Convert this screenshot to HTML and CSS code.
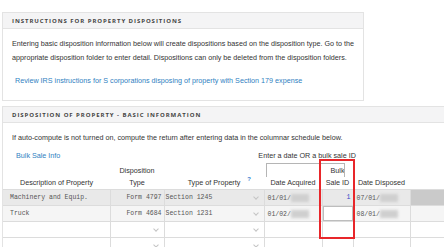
FILE: index.html
```html
<!DOCTYPE html>
<html lang="en">
<head>
    <meta charset="UTF-8">
    <title>Property Dispositions</title>
    <link rel="stylesheet" href="styles.css">
</head>
<body>
    <div class="page">
        <!-- Instructions -->
        <div class="panel panel-info">
            <div class="panel-head">INSTRUCTIONS FOR PROPERTY DISPOSITIONS</div>
            <div class="panel-body">
                <p class="text">Entering basic disposition information below will create dispositions based on the disposition type. Go to the appropriate disposition folder to enter detail. Dispositions can only be deleted from the disposition folders.</p>
                <p class="link-line"><a class="link" href="#">Review IRS instructions for S corporations disposing of property with Section 179 expense</a></p>
            </div>
        </div>

        <!-- Basic information -->
        <div class="panel panel-grid">
            <div class="panel-head">DISPOSITION OF PROPERTY - BASIC INFORMATION</div>
            <div class="panel-body flush">
                <p class="text">If auto-compute is not turned on, compute the return after entering data in the columnar schedule below.</p>
                <div class="bulk-row">
                    <a class="link" href="#">Bulk Sale Info</a>
                    <span class="bulk-note">Enter a date OR a bulk sale ID</span>
                </div>
                <div class="grid-wrap">
                    <div class="bulk-box"></div>
                    <div class="highlight"></div>
                    <table class="grid">
                        <colgroup>
                            <col style="width: 107px">
                            <col style="width: 54px">
                            <col style="width: 100px">
                            <col style="width: 58px">
                            <col style="width: 31px">
                            <col style="width: 57px">
                            <col style="width: 70px">
                        </colgroup>
                        <thead>
                            <tr>
                                <th>Description of Property</th>
                                <th>Disposition<br>Type</th>
                                <th class="has-help">Type of Property <span class="help">?</span></th>
                                <th>Date Acquired</th>
                                <th>Bulk<br>Sale ID</th>
                                <th>Date Disposed</th>
                                <th></th>
                            </tr>
                        </thead>
                        <tbody>
                            <tr class="row-active">
                                <td class="mono first">Machinery and Equip.</td>
                                <td class="mono right">Form 4797</td>
                                <td class="mono select">Section 1245<span class="chev"></span></td>
                                <td class="mono">01/01/<span class="blur"></span></td>
                                <td class="mono right num">1</td>
                                <td class="mono">07/01/<span class="blur"></span></td>
                                <td class="dark"></td>
                            </tr>
                            <tr class="row-alt">
                                <td class="mono first">Truck</td>
                                <td class="mono right">Form 4684</td>
                                <td class="mono select">Section 1231<span class="chev"></span></td>
                                <td class="mono">01/02/<span class="blur"></span></td>
                                <td class="input-cell"><span class="cell-input"></span></td>
                                <td class="mono">08/01/<span class="blur"></span></td>
                                <td></td>
                            </tr>
                            <tr>
                                <td></td>
                                <td class="select"><span class="chev"></span></td>
                                <td class="select"><span class="chev"></span></td>
                                <td></td>
                                <td></td>
                                <td></td>
                                <td></td>
                            </tr>
                            <tr>
                                <td></td>
                                <td class="select"><span class="chev"></span></td>
                                <td class="select"><span class="chev"></span></td>
                                <td></td>
                                <td></td>
                                <td></td>
                                <td></td>
                            </tr>
                        </tbody>
                    </table>
                </div>
            </div>
        </div>
    </div>
</body>
</html>
```

FILE: styles.css
```css
body {
    margin: 0;
    font-family: "Liberation Sans", Arial, sans-serif;
    font-size: 7.2px;
    color: #333;
    background-color: #fff;
    overflow: hidden;
}
.page {
    padding: 12px 0 0 2px;
}
.panel {
    border: 1px solid #e3e3e3;
    background-color: #fff;
}
.panel-info {
    width: 360px;
    margin-bottom: 5px;
}
.panel-grid {
    width: 480px;
}
.panel-head {
    display: flex;
    align-items: center;
    height: 15px;
    padding-left: 9px;
    border-bottom: 1px solid #e3e3e3;
    background-color: #f4f4f5;
    font-family: "Open Sans", sans-serif;
    font-size: 6px;
    font-weight: bold;
    letter-spacing: 0.95px;
    color: #444;
}
.panel-body {
    padding: 8px 9px 12px 9px;
}
.panel-body.flush {
    padding: 8px 0 0 0;
}
.text {
    margin: 0;
    line-height: 14px;
}
.flush .text {
    padding-left: 9px;
}
.link-line {
    margin: 9px 0 0 3px;
    line-height: 14px;
}
.link {
    color: #2f7fc1;
    text-decoration: none;
}
.bulk-row {
    display: flex;
    margin-top: 4px;
    line-height: 14px;
}
.bulk-row .link {
    margin-left: 13px;
}
.bulk-note {
    margin-left: 198px;
}
.grid-wrap {
    position: relative;
    margin-top: 2px;
}
.bulk-box {
    position: absolute;
    left: 263px;
    top: -2px;
    width: 77px;
    height: 13px;
    border: 1px solid #b5b5b5;
    border-bottom: none;
}
.highlight {
    position: absolute;
    left: 316px;
    top: -6px;
    width: 32px;
    height: 76px;
    border: 2px solid #e8262a;
    z-index: 2;
}
.grid {
    table-layout: fixed;
    border-collapse: collapse;
    width: 477px;
}
.grid th {
    height: 24px;
    padding: 0;
    vertical-align: bottom;
    font-weight: normal;
    line-height: 12px;
    color: #333;
    white-space: nowrap;
}
.grid th.has-help {
    position: relative;
}
.help {
    position: absolute;
    right: 13px;
    top: 8px;
    color: #3b7fd0;
    font-size: 6px;
    font-weight: bold;
}
.grid td {
    position: relative;
    height: 15px;
    padding: 0 3px;
    border-top: 1px solid #dcdcdc;
    border-right: 1px solid #dcdcdc;
    white-space: nowrap;
    overflow: hidden;
}
.grid td.first {
    padding-left: 7px;
}
.mono {
    font-family: "Liberation Mono", "Courier New", monospace;
    font-size: 6.5px;
    color: #555;
}
.right {
    text-align: right;
}
.grid td.mono.right {
    padding-right: 2px;
}
.num {
    color: #3347c8;
}
.row-active td {
    background-color: #e9e9e9;
}
.row-active td.dark {
    background-color: #cacaca;
}
.row-alt td {
    background-color: #f5f5f5;
}
.grid td.select {
    padding-left: 1px;
}
.chev {
    position: absolute;
    right: 6px;
    top: 5px;
    width: 3px;
    height: 3px;
    border-right: 1px solid #c4c4c4;
    border-bottom: 1px solid #c4c4c4;
    transform: rotate(45deg);
}
.blur {
    display: inline-block;
    width: 18px;
    height: 8px;
    vertical-align: middle;
    background-color: #cfcfcf;
    filter: blur(1.5px);
}
.grid td.input-cell {
    padding: 0;
    background-color: #f5f5f5;
}
.cell-input {
    display: block;
    height: 13px;
    border: 1px solid #bdbdbd;
    background-color: #fff;
}
```
